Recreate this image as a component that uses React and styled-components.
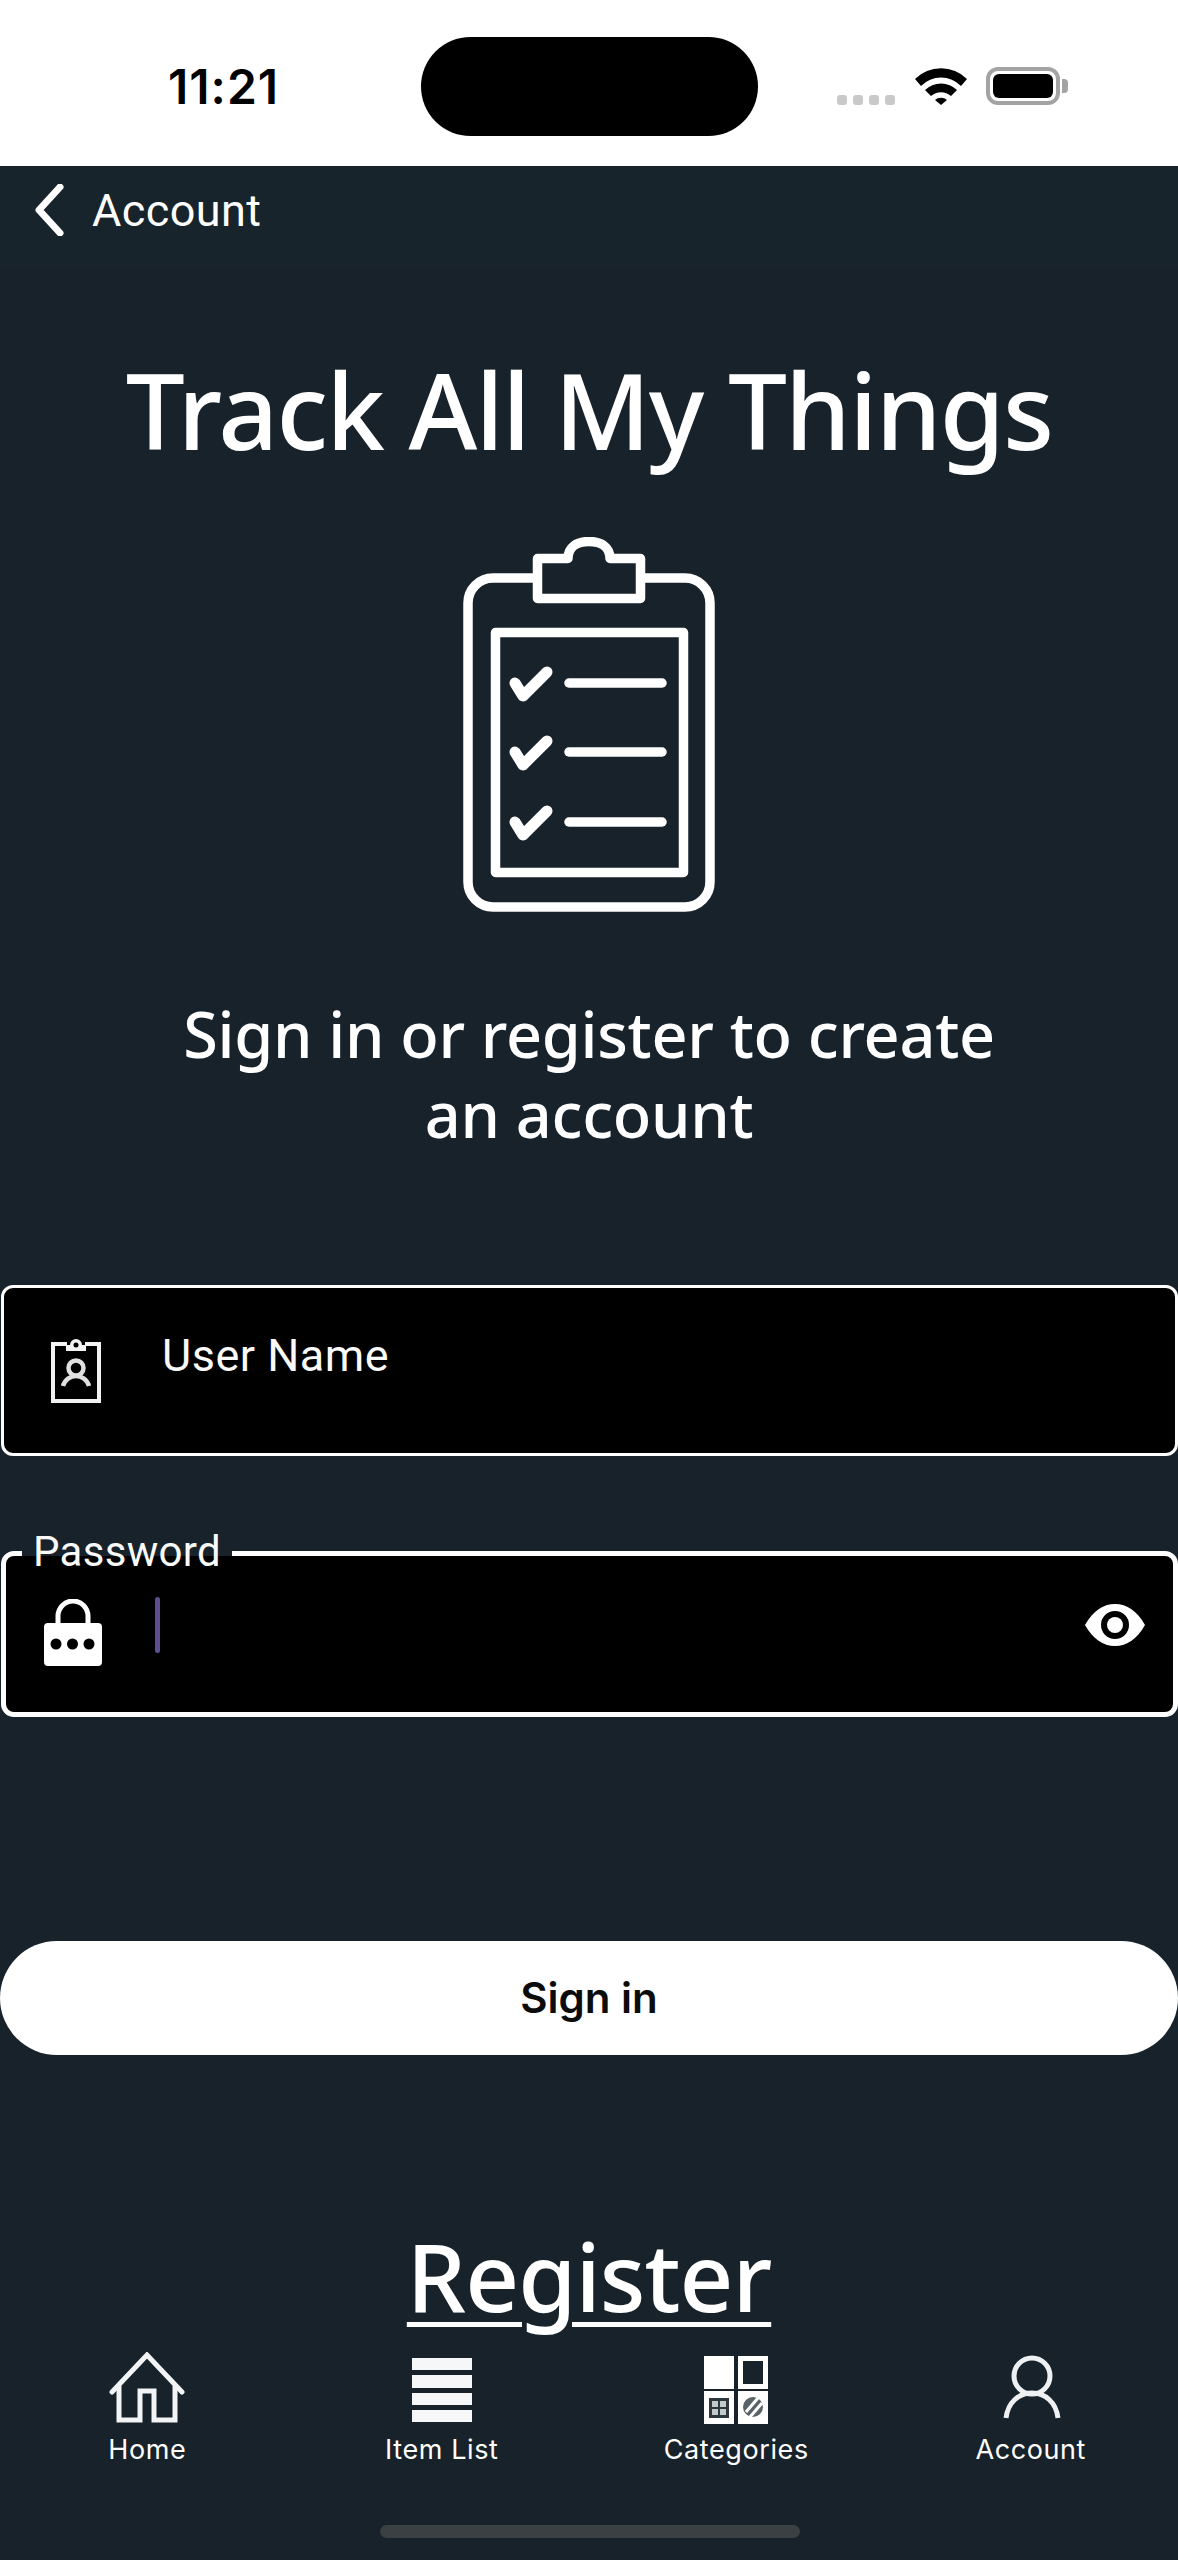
import React from "react";
import styled, { createGlobalStyle } from "styled-components";

const Global = createGlobalStyle`
  html, body { margin: 0; padding: 0; background: #17222b; }
  * { box-sizing: border-box; }
`;
const Page = styled.div`
  width: 1178px; height: 2560px; background: #17222b; color: #fff;
  display: flex; flex-direction: column; overflow: hidden;
  font-family: Inter, "Liberation Sans", sans-serif;
`;
const StatusBar = styled.div`
  height: 166px; background: #fff; display: grid;
  grid-template-columns: 421px 337px 1fr; padding-top: 37px; align-items: start;
`;
const Time = styled.div`
  font: 600 48px/1 Inter, "Liberation Sans", sans-serif; color: #000; letter-spacing: 1px;
  padding: 26px 0 0 168px;
`;
const Island = styled.div`
  height: 99px; background: #000; border-radius: 50px;
`;
const StatusIcons = styled.div`
  display: flex; align-items: flex-end; padding: 30px 0 0 79px; gap: 20px; height: 68px;
`;
const Dots = styled.div`
  display: flex; gap: 6px; align-self: flex-end;
`;
const Dot = styled.span`
  width: 10px; height: 10px; border-radius: 3px; background: #c9c9c9;
`;
const Header = styled.div`
  height: 102px; background: #18242b; display: flex; align-items: center; padding: 0 0 14px 34px; gap: 28px;
  font-size: 44px; font-weight: 400;
`;
const HeaderTitle = styled.span`
  font: 400 45px/1 Roboto, sans-serif; letter-spacing: 0.4px;
`;
const Main = styled.div`
  flex: 1; display: flex; flex-direction: column; align-items: center; min-height: 0;
`;
const Title = styled.h1`
  margin: 79px 0 0; font: 500 105px/1.2 "Noto Sans", sans-serif; letter-spacing: -1.8px; white-space: nowrap;
`;
const Art = styled.svg`
  display: block; width: 252px; height: 375px; margin-top: 64px;
`;
const Subtitle = styled.p`
  margin: 82px 0 0; text-align: center; font: 500 63px/80px "Noto Sans", sans-serif; letter-spacing: -0.3px;
`;
const Field = styled.div`
  position: relative; align-self: stretch; display: flex;
  background: #000; border-style: solid; border-color: #fff;
`;
const NameField = styled(Field)`
  height: 171px; margin: 131px 0 0 1px; border-width: 3px; border-radius: 12px;
  padding: 49px 0 0 47px;
`;
const NameText = styled.span`
  font: 400 45px/1 Roboto, sans-serif; letter-spacing: 0.5px; margin: -15px 0 0 61px;
  align-self: flex-start; color: #fafafa; height: 60px; padding-top: 11px;
`;
const PassField = styled(Field)`
  height: 166px; margin: 95px 0 0 1px; border-width: 5px; border-radius: 13px;
  align-items: flex-start; padding: 43px 0 0 37px;
`;
const Legend = styled.span`
  position: absolute; left: 16px; top: -31px; padding: 0 11px; height: 53px;
  font: 400 42px/53px Roboto, sans-serif; letter-spacing: 0.3px; color: #fafafa;
  background: linear-gradient(#17222b 0 58%, #000 58% 100%);
`;
const Caret = styled.span`
  width: 5px; height: 56px; border-radius: 3px; background: #5d4f8f; margin: -2px 0 0 52px;
`;
const EyeIcon = styled.svg`
  margin: 4px 28px 0 auto; width: 60px; height: 44px; display: block;
`;
const SignIn = styled.button`
  align-self: stretch; height: 114px; margin-top: 224px; border: 0; border-radius: 57px; background: #fff;
  font: 600 42px/1 Inter, sans-serif; color: #0c0c0c; padding: 0;
`;
const Register = styled.a`
  margin-top: 165px; font: 500 94px/1.2 "Noto Sans", sans-serif; letter-spacing: -1px; color: #fff;
  text-decoration: underline; text-decoration-thickness: 5px; text-underline-offset: 10px; white-space: nowrap;
`;
const TabBar = styled.nav`
  height: 222px; background: #17222a; display: grid; grid-template-columns: repeat(4, 1fr);
  position: relative; flex: none; padding-top: 14px; z-index: 1;
`;
const Tab = styled.div`
  display: flex; flex-direction: column; align-items: center;
`;
const TabIcon = styled.svg`
  width: 80px; height: 72px; display: block;
`;
const TabLabel = styled.span`
  margin-top: 9px; font: 400 27px/34px Inter, sans-serif; letter-spacing: 0.6px;
`;
const HomeBar = styled.div`
  position: absolute; left: 380px; width: 420px; top: 187px; height: 13px; border-radius: 7px; background: #3b4143;
`;

const Wifi = () => (
  <svg width="52" height="38" viewBox="0 0 52 38" fill="#000" style={{ display: "block" }}>
    <path d="M0 12 A37 37 0 0 1 52 12 L46 19 A28 28 0 0 0 6 19 Z" />
    <path d="M10 23 A23 23 0 0 1 42 23 L36 29 A15 15 0 0 0 16 29 Z" />
    <path d="M20 33 A9 9 0 0 1 32 33 L26 38 Z" />
  </svg>
);
const Battery = () => (
  <svg width="84" height="38" viewBox="0 0 84 38" style={{ display: "block", marginLeft: -1 }}>
    <rect x="2" y="2" width="70" height="34" rx="10" fill="none" stroke="#a3a3a3" strokeWidth="4" />
    <rect x="7" y="7" width="60" height="24" rx="6" fill="#000" />
    <path d="M76 12 h2 a4 4 0 0 1 4 4 v6 a4 4 0 0 1 -4 4 h-2 Z" fill="#a3a3a3" />
  </svg>
);
const Chevron = () => (
  <svg width="30" height="52" viewBox="0 0 30 52" style={{ display: "block", flex: "none" }}>
    <path d="M26 3 L5 26 L26 49" fill="none" stroke="#fff" strokeWidth="7" strokeLinecap="round" strokeLinejoin="round" />
  </svg>
);
const Row = ({ y }) => (
  <g fill="none" stroke="#fff" strokeLinecap="round" strokeLinejoin="round">
    <path strokeWidth="11" d={`M52 ${y} L60 ${y + 13} L84 ${y - 11}`} />
    <path strokeWidth="9.5" d={`M106 ${y} H199`} />
  </g>
);
const ClipboardArt = () => (
  <Art viewBox="0 0 252 375">
    <path d="M70 41 H30 a25 25 0 0 0 -25 25 V345 a25 25 0 0 0 25 25 H222 a25 25 0 0 0 25 -25 V66 a25 25 0 0 0 -25 -25 H182"
      fill="none" stroke="#fff" strokeWidth="9.5" />
    <path d="M74.5 21.5 H105 C105 10 114 4.5 126 4.5 C138 4.5 147 10 147 21.5 H177.5 V61.5 H74.5 Z"
      fill="none" stroke="#fff" strokeWidth="9.5" strokeLinejoin="round" />
    <rect x="32.5" y="95.5" width="188" height="240" fill="none" stroke="#fff" strokeWidth="9.5" strokeLinejoin="round" />
    <Row y={146} />
    <Row y={215} />
    <Row y={285} />
  </Art>
);
const BadgeIcon = () => (
  <svg width="50" height="66" viewBox="0 0 50 66" style={{ display: "block", flex: "none" }}>
    <path d="M16 7 H2 V64 H48 V7 H34" fill="none" stroke="#f2f2f2" strokeWidth="4" />
    <path d="M15 14 V8 H19 A6 6 0 0 1 31 8 H35 V14 Z" fill="#f2f2f2" />
    <circle cx="25" cy="8" r="2.5" fill="#000" />
    <circle cx="25" cy="31" r="7.5" fill="none" stroke="#e0e0e0" strokeWidth="4.5" />
    <path d="M12 49 C14 42 20 39 25 39 C30 39 36 42 38 49" fill="none" stroke="#e0e0e0" strokeWidth="4.5" />
  </svg>
);
const LockIcon = () => (
  <svg width="60" height="68" viewBox="0 0 60 68" style={{ display: "block", flex: "none" }}>
    <path d="M15 26 V17 A15 15 0 0 1 45 17 V26" fill="none" stroke="#fff" strokeWidth="5" />
    <rect x="1" y="24" width="58" height="43" rx="4" fill="#fff" />
    <circle cx="13" cy="45" r="5.5" fill="#000" />
    <circle cx="29.5" cy="45" r="5.5" fill="#000" />
    <circle cx="46" cy="45" r="5.5" fill="#000" />
  </svg>
);
const Eye = () => (
  <EyeIcon viewBox="0 0 60 44">
    <path fillRule="evenodd" fill="#fff" d="M0 22 C8 8 18 1 30 1 C42 1 52 8 60 22 C52 36 42 43 30 43 C18 43 8 36 0 22 Z M30 8 A14 14 0 1 0 30 36 A14 14 0 1 0 30 8 Z" />
    <circle cx="30" cy="22" r="8" fill="#fff" />
  </EyeIcon>
);
const HomeGlyph = () => (
  <TabIcon viewBox="0 0 80 72">
    <path d="M5 40 L40 3 L75 40" fill="none" stroke="#f2f4f5" strokeWidth="5" strokeLinecap="round" />
    <path d="M12 34 V68 H33 V39 H47 V68 H68 V34" fill="none" stroke="#f2f4f5" strokeWidth="5" />
  </TabIcon>
);
const ListGlyph = () => (
  <TabIcon viewBox="0 0 80 72">
    <g fill="#f6f7f8">
      <rect x="10" y="6" width="60" height="12" />
      <rect x="10" y="23" width="60" height="13" />
      <rect x="10" y="41" width="60" height="12" />
      <rect x="10" y="58" width="60" height="12" />
    </g>
  </TabIcon>
);
const CategoriesGlyph = () => (
  <TabIcon viewBox="0 0 80 72">
    <rect x="8" y="4" width="30" height="33" fill="#fff" />
    <rect x="42" y="4" width="30" height="33" fill="#fff" />
    <rect x="47" y="9" width="20" height="23" fill="#17222b" />
    <rect x="8" y="39" width="30" height="33" fill="#fff" />
    <rect x="13" y="46" width="20" height="20" fill="#2c373e" />
    <g fill="#c5cacc">
      <rect x="16" y="49" width="6" height="6" />
      <rect x="24" y="49" width="6" height="6" />
      <rect x="16" y="57" width="6" height="6" />
      <rect x="24" y="57" width="6" height="6" />
    </g>
    <rect x="42" y="39" width="30" height="33" fill="#fff" />
    <circle cx="57" cy="55" r="10" fill="#5a6368" />
    <path d="M50 60 L62 46 M54 65 L66 51" stroke="#fff" strokeWidth="3" />
  </TabIcon>
);
const PersonGlyph = () => (
  <TabIcon viewBox="0 0 80 72">
    <circle cx="41" cy="24" r="18" fill="none" stroke="#eef0f1" strokeWidth="5" />
    <path d="M15 66 C17 50 28 41 41 41 C54 41 65 50 67 66" fill="none" stroke="#eef0f1" strokeWidth="5" />
  </TabIcon>
);

export default function App() {
  return (
    <Page>
      <Global />
      <StatusBar>
        <Time>11:21</Time>
        <Island />
        <StatusIcons>
          <Dots><Dot /><Dot /><Dot /><Dot /></Dots>
          <Wifi />
          <Battery />
        </StatusIcons>
      </StatusBar>
      <Header>
        <Chevron />
        <HeaderTitle>Account</HeaderTitle>
      </Header>
      <Main>
        <Title>Track All My Things</Title>
        <ClipboardArt />
        <Subtitle>Sign in or register to create<br />an account</Subtitle>
        <NameField>
          <BadgeIcon />
          <NameText>User Name</NameText>
        </NameField>
        <PassField>
          <Legend>Password</Legend>
          <LockIcon />
          <Caret />
          <Eye />
        </PassField>
        <SignIn>Sign in</SignIn>
        <Register>Register</Register>
      </Main>
      <TabBar>
        <Tab><HomeGlyph /><TabLabel>Home</TabLabel></Tab>
        <Tab><ListGlyph /><TabLabel>Item List</TabLabel></Tab>
        <Tab><CategoriesGlyph /><TabLabel>Categories</TabLabel></Tab>
        <Tab><PersonGlyph /><TabLabel>Account</TabLabel></Tab>
        <HomeBar />
      </TabBar>
    </Page>
  );
}
